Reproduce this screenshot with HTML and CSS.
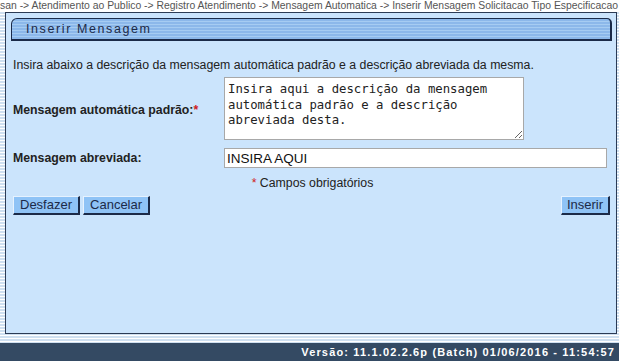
FILE: index.html
```html
<!DOCTYPE html>
<html lang="pt-BR">
<head>
    <meta charset="UTF-8">
    <title>Inserir Mensagem</title>
    <link rel="stylesheet" href="styles.css">
</head>
<body>
<div class="breadcrumb">san -&gt; Atendimento ao Publico -&gt; Registro Atendimento -&gt; Mensagem Automatica -&gt; Inserir Mensagem Solicitacao Tipo Especificacao</div>
<div class="page">
    <div class="panel">
        <div class="title-bar">Inserir Mensagem</div>
        <p class="intro">Insira abaixo a descrição da mensagem automática padrão e a descrição abreviada da mesma.</p>
        <div class="form-grid">
            <label for="mensagem" class="label-tall">Mensagem automática padrão:<span class="req">*</span></label>
            <textarea id="mensagem" name="mensagem">Insira aqui a descrição da mensagem automática padrão e a descrição abreviada desta.</textarea>
            <label for="abreviada">Mensagem abreviada:</label>
            <input type="text" id="abreviada" name="abreviada" value="INSIRA AQUI">
        </div>
        <div class="required-note"><span class="req">*</span> Campos obrigatórios</div>
        <div class="actions">
            <div class="left-buttons">
                <button>Desfazer</button>
                <button>Cancelar</button>
            </div>
            <button class="btn-small">Inserir</button>
        </div>
    </div>
</div>
<div class="footer">Versão: 11.1.02.2.6p (Batch) 01/06/2016 - 11:54:57</div>
</body>
</html>
```

FILE: styles.css
```css
body {
    margin: 0;
    font-family: "Liberation Sans", Arial, sans-serif;
    background: #fff;
    width: 619px;
    height: 361px;
    overflow: hidden;
}
.breadcrumb {
    height: 12px;
    line-height: 11px;
    font-size: 10.4px;
    color: #555;
    white-space: nowrap;
    overflow: hidden;
}
.page {
    height: 331px;
    box-sizing: border-box;
    padding: 0 2px 9px 5px;
    background: repeating-linear-gradient(to bottom, #cfe0f1 0, #cfe0f1 2px, #ffffff 2px, #ffffff 3px);
}
.panel {
    height: 100%;
    box-sizing: border-box;
    border: 1px solid #2c3b55;
    background-color: #cbe4fc;
    padding: 5px 4px 0 7px;
}
.title-bar {
    height: 20px;
    margin-left: -2px;
    border: 1px solid #1b2a48;
    border-width: 1px 2px 2px 1px;
    border-radius: 6px 5px 0 0;
    background: repeating-linear-gradient(to bottom, #8cb8ea 0, #8cb8ea 2px, #a6ccf2 2px, #a6ccf2 3px);
    padding-left: 14px;
    font-size: 12.5px;
    line-height: 21px;
    letter-spacing: 1.6px;
    color: #1c2a48;
}
.intro {
    margin: 17px 0 0;
    font-size: 12.3px;
    line-height: 14px;
    color: #222;
}
.form-grid {
    display: grid;
    grid-template-columns: 211px 1fr;
    row-gap: 8px;
    align-items: center;
    margin-top: 5px;
}
.form-grid label {
    font-size: 12.3px;
    font-weight: bold;
    color: #222;
}
.label-tall {
    margin-top: 3px;
}
.req {
    color: #d02020;
}
textarea {
    display: block;
    width: 300px;
    height: 63px;
    box-sizing: border-box;
    border: 1px solid #a8a8a8;
    padding: 4px 3px 0;
    font-family: "DejaVu Sans Mono", monospace;
    font-size: 12.3px;
    line-height: 15.5px;
    color: #222;
    resize: both;
    overflow: hidden;
}
input[type="text"] {
    display: block;
    width: 383px;
    height: 20px;
    box-sizing: border-box;
    border: 1px solid #a8a8a8;
    padding: 0 2px;
    font-family: "Liberation Sans", Arial, sans-serif;
    font-size: 13.5px;
    color: #111;
}
.required-note {
    margin-top: 8px;
    text-align: center;
    font-size: 12.3px;
    color: #222;
}
.actions {
    display: flex;
    justify-content: space-between;
    margin-top: 6px;
    padding-right: 2px;
}
.left-buttons {
    display: flex;
    gap: 3px;
}
button {
    height: 19px;
    padding: 0 6px;
    font-family: "Liberation Sans", Arial, sans-serif;
    font-size: 13px;
    line-height: 16px;
    color: #1c2a48;
    background-color: #8fc3f6;
    border: 1px solid;
    border-color: #e6f2ff #1b2a48 #1b2a48 #e6f2ff;
    border-width: 1px 2px 2px 1px;
    cursor: pointer;
}
.btn-small {
    padding: 0 5px;
}
.footer {
    height: 18px;
    background-color: #344a63;
    color: #fff;
    font-size: 11px;
    font-weight: bold;
    letter-spacing: 1.15px;
    line-height: 19px;
    text-align: right;
    padding-right: 4px;
}
```
